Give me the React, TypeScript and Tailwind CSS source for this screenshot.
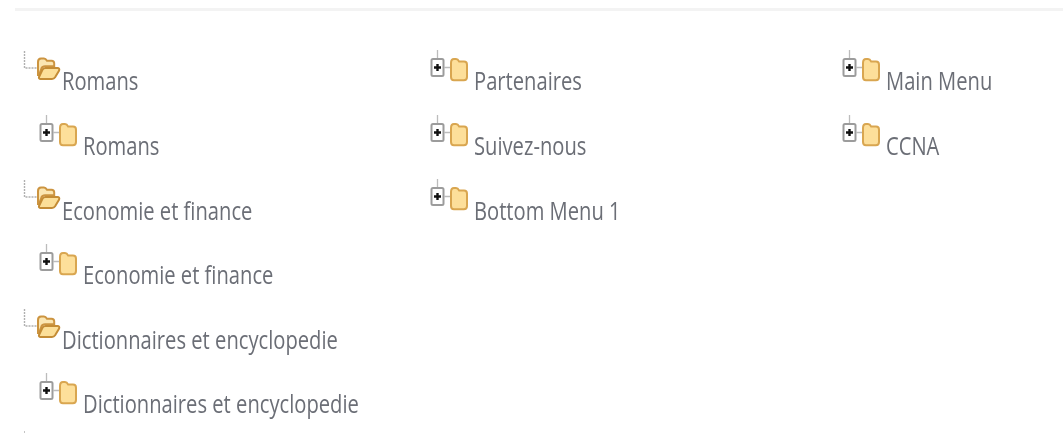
import React from 'react';

type Node = { label: string; open?: boolean; nested?: boolean };

const columns: { width: string; nodes: Node[] }[] = [
  {
    width: 'w-[408px]',
    nodes: [
      { label: 'Romans', open: true },
      { label: 'Romans', nested: true },
      { label: 'Economie et finance', open: true },
      { label: 'Economie et finance', nested: true },
      { label: 'Dictionnaires et encyclopedie', open: true },
      { label: 'Dictionnaires et encyclopedie', nested: true },
    ],
  },
  {
    width: 'w-[412px]',
    nodes: [{ label: 'Partenaires' }, { label: 'Suivez-nous' }, { label: 'Bottom Menu 1' }],
  },
  {
    width: 'w-[200px]',
    nodes: [{ label: 'Main Menu' }, { label: 'CCNA' }],
  },
];

const OpenFolder = () => (
  <svg width="40" height="34" viewBox="0 0 40 34" className="shrink-0 blur-[0.6px]">
    <path d="M2.5 2v17H15" fill="none" stroke="#b0b0b0" strokeWidth="1.4" strokeDasharray="2 1" />
    <path
      d="M16 26V13c0-2 1.2-3.5 3-3.5h3c1.4 0 2.2.9 3 2.2h4.5c1.6 0 2.7 1 2.7 2.6v3H23c-1.8 0-3 .8-3.6 2.2L17 26z"
      fill="#fbe6b2"
      stroke="#cc9440"
      strokeWidth="2"
    />
    <path
      d="M18.5 30H30c1.4 0 2.4-.6 3.1-1.7l3.9-6.6c.8-1.3 0-2.7-1.5-2.7H23.5c-1.5 0-2.6.7-3.2 2l-3.3 7c-.4 1.1.4 2 1.5 2z"
      fill="#fcdf98"
      stroke="#c48c35"
      strokeWidth="2"
    />
  </svg>
);

const ClosedFolder = () => (
  <svg width="40" height="34" viewBox="0 0 40 34" className="shrink-0 blur-[0.6px]">
    <path d="M7.5 1v8M14.5 18.5H21" fill="none" stroke="#bcbcbc" strokeWidth="1.3" />
    <rect x="1.5" y="10" width="12" height="17" rx="1.5" fill="#fff" stroke="#9c9c9c" strokeWidth="2" />
    <path d="M4 18.5h7M7.5 15v7" fill="none" stroke="#111" strokeWidth="2.4" />
    <path
      d="M21 14c0-2.4 1.2-4 3-4h2c1.5 0 2.4 1 3.2 2.6H34c2 0 3 1.2 3 3.2V28c0 2-1.2 3.2-3.2 3.2H24c-1.8 0-3-1.2-3-3.2z"
      fill="#fddf9a"
      stroke="#d9a650"
      strokeWidth="2"
    />
  </svg>
);

function TreeRow({ node }: { node: Node }) {
  return (
    <div className={`flex h-[64.6px] items-start ${node.nested ? 'pl-[17px]' : ''}`}>
      {node.open ? <OpenFolder /> : <ClosedFolder />}
      <span
        className={`origin-left scale-x-[0.807] whitespace-nowrap text-[25px] leading-[34px] text-[#6b6e76] blur-[0.4px] mt-[14.4px] ${
          node.open ? '' : 'ml-[4px]'
        }`}
      >
        {node.label}
      </span>
    </div>
  );
}

export default function App() {
  return (
    <div className="h-[441px] w-[1063px] overflow-hidden bg-white font-['Open_Sans',sans-serif]">
      <div className="ml-[15px] mt-[8px] h-[3px] bg-[#f3f3f3]" />
      <div className="flex pl-[22px] pt-[38px]">
        {columns.map((col, i) => (
          <div key={i} className={col.width}>
            {col.nodes.map((node, j) => (
              <TreeRow key={j} node={node} />
            ))}
          </div>
        ))}
      </div>
      <div className="ml-[24px] mt-[-6px] h-[2px] w-[1px] bg-[#c4c4c4]" />
    </div>
  );
}
